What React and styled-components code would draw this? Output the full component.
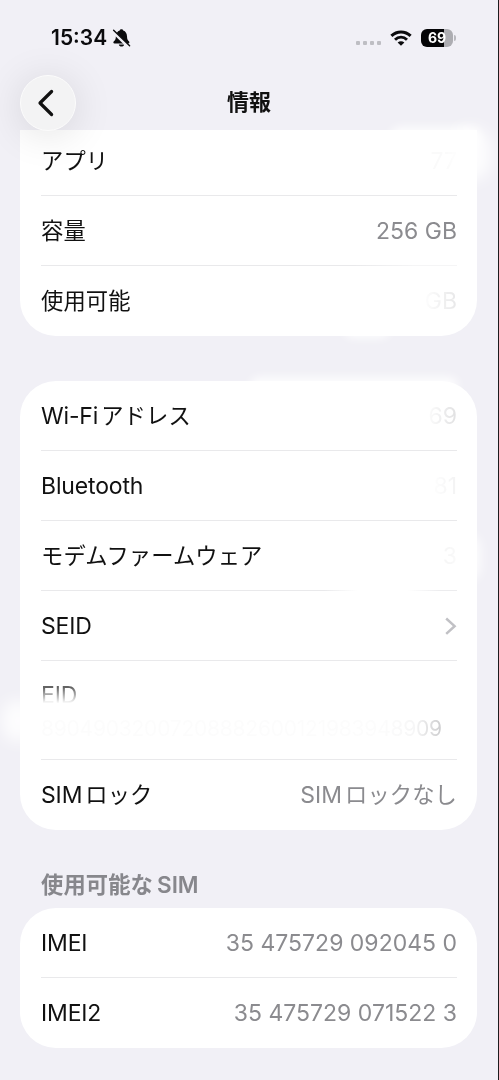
import styled, { createGlobalStyle, css } from 'styled-components';

const GlobalStyle = createGlobalStyle`
  * {
    box-sizing: border-box;
  }

  body {
    margin: 0;
    background: #f1f0f6;
    font-family: Inter, 'Noto Sans CJK JP', sans-serif;
  }
`;

const storage = [
  { label: 'アプリ', value: '77', ghost: 0.04 },
  { label: '容量', value: '256 GB', fade: 'soft' },
  { label: '使用可能', value: 'GB', ghost: 0.2, mask: true },
];

const network = [
  { label: 'Wi-Fiアドレス', value: '69', ghost: 0.26, mask: true },
  { label: 'Bluetooth', value: '81', ghost: 0.1, mask: true },
  { label: 'モデムファームウェア', value: '3', ghost: 0.07, fade: 'gap' },
  { label: 'SEID', chevron: true },
];

const sims = [
  { label: 'IMEI', value: '35 475729 092045 0' },
  { label: 'IMEI2', value: '35 475729 071522 3' },
];

// Kana and kanji are set slightly smaller than the latin glyphs
const MixedText = ({ children }) =>
  children.split(/([\u3000-\u9fff]+)/).filter(Boolean).map((part, i) =>
    /[\u3000-\u9fff]/.test(part) ? <Kana key={i}>{part}</Kana> : <Latin key={i}>{part}</Latin>
  );

const InfoRow = ({ label, value, ghost, mask, fade, chevron }) => (
  <Row $fade={fade}>
    <Label><MixedText>{label}</MixedText></Label>
    {value && (
      <Value $ghost={ghost} $mask={mask}><MixedText>{value}</MixedText></Value>
    )}
    {chevron && (
      <svg width="13" height="20" viewBox="0 0 13 20" fill="none">
        <path d="M2.2 2.5L10.6 10.2L2.2 17.9" stroke="#c1c1c5" strokeWidth="2.5" />
      </svg>
    )}
  </Row>
);

const BellOff = () => (
  <svg width="20" height="20" viewBox="0 0 20 20">
    <path
      d="M10.5 1.2C9.6 1.2 8.9 1.7 8.7 2.5C6.3 3.3 5 5.5 4.9 8.2C4.8 11.2 4.2 12 2.9 13.2C1.9 14.2 2.3 15.4 3.6 15.4H17.2C18.4 15.4 18.8 14.2 17.9 13.2C16.7 12 16.1 11.2 16 8.2C15.9 5.5 14.7 3.3 12.2 2.5C12 1.7 11.4 1.2 10.5 1.2Z"
      fill="#0b0b0d"
    />
    <path d="M7.8 16.5H13.2C12.9 17.9 11.9 18.6 10.5 18.6C9.1 18.6 8.1 17.9 7.8 16.5Z" fill="#0b0b0d" />
    <path d="M1.4 2.9L17.6 18.9" stroke="#f1f0f6" strokeWidth="3.2" />
    <path d="M2.6 2.2L18.6 17.8" stroke="#0b0b0d" strokeWidth="1.4" strokeLinecap="round" />
  </svg>
);

const Wifi = () => (
  <svg width="22" height="16" viewBox="0 0 22 16" fill="none">
    <path d="M1.4 5.9C6.8 .6 15.2 .6 20.6 5.9" stroke="#0b0b0d" strokeWidth="3" />
    <path d="M5 9.7C8.5 6.3 13.5 6.3 17 9.7" stroke="#0b0b0d" strokeWidth="2.9" />
    <path d="M11 15.8L7.6 12.6C9.6 10.8 12.4 10.8 14.4 12.6Z" fill="#0b0b0d" />
  </svg>
);

const App = () => (
  <>
    <GlobalStyle />
    <Screen>
      <StatusBar>
        <Clock>15:34</Clock>
        <BellOff />
        <Signal>
          <i /><i /><i /><i />
        </Signal>
        <Wifi />
        <Battery>69</Battery>
        <BatteryCap />
      </StatusBar>
      <NavBar>
        <BackButton>
          <svg width="20" height="30" viewBox="0 0 20 30" fill="none">
            <path d="M15.6 3.5L4 15L15.6 26.5" stroke="#111" strokeWidth="3.2" strokeLinecap="round" strokeLinejoin="round" />
          </svg>
        </BackButton>
        <Title>情報</Title>
      </NavBar>

      <Content>
        <Card $clipped>
          {storage.map(row => <InfoRow key={row.label} {...row} />)}
        </Card>
        <Card>
          {network.map(row => <InfoRow key={row.label} {...row} />)}
          <StackedRow>
            <FadedLabel>EID</FadedLabel>
            <Eid>89049032007208882600121983948909</Eid>
          </StackedRow>
          <InfoRow label="SIMロック" value="SIMロックなし" />
        </Card>
        <SectionTitle><MixedText>使用可能なSIM</MixedText></SectionTitle>
        <Card>
          {sims.map(row => <InfoRow key={row.label} {...row} />)}
        </Card>
      </Content>

      <Smudge $x={390} $y={127} $w={90} $h={20} $blur={5} />
      <Smudge $x={450} $y={127} $w={41} $h={54} $blur={8} />
      <Smudge $x={344} $y={320} $w={46} $h={18} $blur={5} />
      <Smudge $x={250} $y={377} $w={208} $h={18} $blur={5} />
      <Smudge $x={2} $y={700} $w={32} $h={42} $blur={8} />
      <Smudge $x={456} $y={535} $w={24} $h={45} $blur={6} />
    </Screen>
  </>
);

const Screen = styled.main`
  position: relative;
  width: 499px;
  height: 1080px;
  overflow: hidden;
  background: #f1f0f6;
  border-right: 1px solid #1c1c1e;
`;

const StatusBar = styled.div`
  height: 75px;
  padding: 0 42px 0 51px;
  display: flex;
  align-items: center;
`;

const Clock = styled.span`
  width: 60px;
  font-size: 21px;
  font-weight: 600;
  letter-spacing: 0;
  color: #0b0b0d;
  white-space: nowrap;
`;

const Signal = styled.div`
  display: flex;
  gap: 3px;
  margin: 11px 9px 0 auto;

  i {
    width: 4px;
    height: 4px;
    border-radius: 1px;
    background: #bebec3;
  }
`;

const Battery = styled.div`
  width: 32px;
  height: 18px;
  margin-left: 9px;
  border-radius: 6px;
  background: linear-gradient(90deg, #050507 71%, #adadb2 71%);
  color: #fff;
  font-size: 14px;
  font-weight: 700;
  line-height: 18px;
  text-align: center;
`;

const BatteryCap = styled.div`
  width: 2px;
  height: 6px;
  margin-left: 1px;
  border-radius: 0 2px 2px 0;
  background: #b9b9be;
`;

const NavBar = styled.header`
  height: 55px;
  padding: 0 20px;
  display: grid;
  grid-template-columns: 56px 1fr 56px;
  align-items: center;
`;

const BackButton = styled.div`
  position: relative;
  z-index: 1;
  width: 56px;
  height: 56px;
  padding-right: 4px;
  display: flex;
  align-items: center;
  justify-content: center;
  border: 1px solid #fcfcfc;
  border-radius: 50%;
  background: #f3f3f4;
  box-shadow: 0 4px 40px rgba(0, 0, 0, 0.12);
`;

const Title = styled.h1`
  margin: 0;
  text-align: center;
  font-size: 22px;
  font-weight: 700;
  line-height: 28px;
  padding-bottom: 2px;
  color: #111;
`;

const Content = styled.div`
  padding: 0 21px 0 20px;
`;

const Card = styled.section`
  padding: 0 20px 0 21px;
  border-radius: 36px;
  background: #fff;

  & + & {
    margin-top: 45px;
  }

  ${props => props.$clipped && css`
    height: 206px;
    border-radius: 0 0 36px 36px;
    display: flex;
    flex-direction: column;
    justify-content: flex-end;
  `}
`;

const lines = {
  soft: 'linear-gradient(90deg, #e9e9eb 75%, #f5f5f6 90%)',
  gap: 'linear-gradient(90deg, #e9e9eb 68%, #fff 76%, #fff 88%, #ececee 96%)',
};

const Row = styled.div`
  height: 70px;
  flex: none;
  display: flex;
  align-items: center;
  justify-content: space-between;

  &:not(:last-child) {
    background: ${props => lines[props.$fade] || 'linear-gradient(#e9e9eb, #e9e9eb)'} left bottom / 100% 1.5px no-repeat;
  }
`;

const Label = styled.span`
  display: inline-flex;
  align-items: center;
  font-size: 23px;
  line-height: 30px;
  letter-spacing: -0.15px;
  color: #111;
  white-space: pre;
`;

const Latin = styled.span``;

const Kana = styled.span`
  font-family: 'Noto Sans CJK JP', sans-serif;
  font-size: 22.3px;
  letter-spacing: 0.1px;
  line-height: 30px;
  padding-bottom: 4px;

  ${Latin} + & {
    margin-left: 3px;
  }

  & + ${Latin} {
    margin-left: 4px;
  }
`;

const Value = styled(Label)`
  color: #8b8b8f;
  letter-spacing: 0;
  opacity: ${props => props.$ghost ?? 1};
  ${props => props.$mask && css`
    mask-image: linear-gradient(90deg, rgba(0, 0, 0, 0.1), #000);
  `}
`;

const StackedRow = styled(Row)`
  height: 99px;
  flex-direction: column;
  align-items: flex-start;
  justify-content: flex-start;
  padding-top: 19px;
`;

const FadedLabel = styled(Label)`
  line-height: 30px;
  mask-image: linear-gradient(rgba(0, 0, 0, 0.65) 25%, rgba(0, 0, 0, 0.04) 75%);
`;

const Eid = styled.span`
  margin-top: 5px;
  width: 402px;
  font-size: 21px;
  line-height: 28px;
  letter-spacing: -0.22px;
  white-space: nowrap;
  color: #8b8b8f;
  mask-image: linear-gradient(90deg, rgba(0, 0, 0, 0.025) 85%, rgba(0, 0, 0, 0.08) 93%, rgba(0, 0, 0, 0.45));
`;

const SectionTitle = styled.h2`
  margin: 0;
  height: 78px;
  padding: 32px 21px 0;
  display: flex;
  align-items: center;
  font-size: 22.5px;
  font-weight: 600;
  line-height: 30px;
  color: #87878c;
`;

// Soft white stroke spilling over the card edges
const Smudge = styled.div`
  position: absolute;
  left: ${props => props.$x}px;
  top: ${props => props.$y}px;
  width: ${props => props.$w}px;
  height: ${props => props.$h}px;
  border-radius: 20px;
  background: #fff;
  filter: blur(${props => props.$blur}px);
  pointer-events: none;
  mix-blend-mode: lighten;
  opacity: 0.85;
`;

export default App;
